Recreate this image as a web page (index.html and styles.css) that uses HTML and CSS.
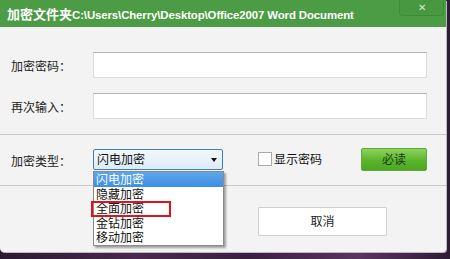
FILE: index.html
```html
<!doctype html>
<html lang="zh-CN">
<head>
	<meta charset="utf-8">
	<title>加密文件夹</title>
	<link rel="stylesheet" href="styles.css">
</head>
<body>
	<div class="window">
		<div class="titlebar">
			<span class="title">加密文件夹<span class="path">C:\Users\Cherry\Desktop\Office2007 Word Document</span></span>
			<span class="close">&#x2715;</span>
		</div>

		<div class="section first">
			<div class="row">
				<label class="label">加密密码：</label>
				<input class="field" type="password">
			</div>
			<div class="row">
				<label class="label">再次输入：</label>
				<input class="field" type="password">
			</div>
		</div>

		<div class="section second">
			<div class="row">
				<label class="label">加密类型：</label>
				<div class="select">
					<span>闪电加密</span>
					<span class="arrow"></span>
				</div>
				<label class="check"><span class="box"></span>显示密码</label>
				<button class="btn-green">必读</button>
			</div>
		</div>

		<div class="section third">
			<button class="btn-cancel">取消</button>
		</div>

		<!-- open dropdown sits over the rows below -->
		<ul class="dropdown">
			<li class="active">闪电加密</li>
			<li>隐藏加密</li>
			<li>全面加密</li>
			<li>金钻加密</li>
			<li>移动加密</li>
		</ul>
		<div class="marker"></div>
	</div>
</body>
</html>
```
FILE: styles.css
```css
html, body {
	margin: 0;
	padding: 0;
}
body {
	width: 450px;
	height: 259px;
	overflow: hidden;
	background: linear-gradient(90deg, #2a1a30 0%, #4a2a4e 30%, #3a2040 55%, #5a3560 80%, #2e1c34 100%);
	font: 12px/1.2 "Noto Sans CJK SC", "Liberation Sans", sans-serif;
	color: #222;
}

.window {
	position: relative;
	width: 446px;
	height: 252px;
	background: #f3f3f3;
	border-radius: 0 0 4px 4px;
	box-shadow: 1px 1px 0 #bbb;
}

/* Title bar */
.titlebar {
	height: 27px;
	background: #4b9c44;
	display: flex;
	align-items: center;
	padding-left: 7px;
	position: relative;
}
.title {
	color: #fff;
	font-family: "Noto Sans CJK SC", sans-serif;
	font-weight: bold;
	font-size: 13px;
	padding-top: 2px;
}
.path {
	font-family: "Liberation Sans", sans-serif;
	font-size: 11.4px;
	letter-spacing: -0.1px;
}
.close {
	position: absolute;
	right: 2px;
	top: 0;
	width: 43px;
	height: 15px;
	background: #489840;
	border: 1px solid #3f8a38;
	border-top: none;
	border-radius: 0 0 4px 4px;
	color: #d6ecd3;
	font-size: 10px;
	text-align: center;
	line-height: 13px;
}

/* Sections */
.section {
	padding-left: 11px;
	padding-right: 19px;
}
.first {
	padding-top: 25px;
	padding-bottom: 15px;
	display: flex;
	flex-direction: column;
	gap: 15px;
	border-bottom: 1px solid #c8c8c8;
}
.second {
	padding-top: 13px;
	padding-bottom: 14px;
	border-bottom: 1px solid #c8c8c8;
}
.third {
	padding-top: 21px;
	padding-left: 258px;
}

.row {
	display: flex;
	align-items: center;
}
.label {
	width: 82px;
	flex: none;
	padding-top: 3px;
	color: #222;
}
.field {
	width: 334px;
	height: 26px;
	box-sizing: border-box;
	border: 1px solid #dcdcdc;
	border-top-color: #b4b4b4;
	background: #fff;
	margin: 0;
}

/* Combo box */
.select {
	width: 130px;
	height: 21px;
	box-sizing: border-box;
	border: 1px solid #3c7fb1;
	border-radius: 2px;
	background: linear-gradient(#f2f8fc, #dcebf6);
	display: flex;
	align-items: center;
	justify-content: space-between;
	padding: 0 4px 0 3px;
	color: #111;
}
.arrow {
	width: 0;
	height: 0;
	border-left: 3.5px solid transparent;
	border-right: 3.5px solid transparent;
	border-top: 4px solid #111;
	margin-right: 1px;
}

.check {
	display: flex;
	align-items: center;
	margin-left: 35px;
	color: #111;
}
.box {
	width: 12px;
	height: 12px;
	border: 1px solid #aaa;
	background: #fff;
	margin-right: 2px;
}

.btn-green {
	margin-left: auto;
	width: 66px;
	height: 23px;
	border: 1px solid #5caa38;
	border-radius: 2px;
	background: linear-gradient(#8fd35a, #5ab52c 55%, #4ea623);
	font: inherit;
	color: #1c3812;
	padding: 0;
}

.btn-cancel {
	width: 129px;
	height: 29px;
	border: 1px solid #d0d0d0;
	border-radius: 1px;
	background: #fff;
	font: inherit;
	color: #222;
	padding: 0;
}

/* Dropdown list */
.dropdown {
	position: absolute;
	left: 93px;
	top: 171px;
	width: 131px;
	height: 75px;
	box-sizing: border-box;
	margin: 0;
	padding: 0;
	list-style: none;
	background: #fff;
	border: 1px solid #8a8a8a;
	box-shadow: 2px 2px 2px rgba(0, 0, 0, 0.35);
}
.dropdown li {
	height: 14.6px;
	line-height: 14.6px;
	padding-left: 2px;
	color: #111;
}
.dropdown li.active {
	background: linear-gradient(#5fa6ec, #3d8fe0);
	color: #fff;
}

.marker {
	position: absolute;
	left: 91px;
	top: 201px;
	width: 76px;
	height: 12px;
	border: 2px solid #e0121c;
}
```
